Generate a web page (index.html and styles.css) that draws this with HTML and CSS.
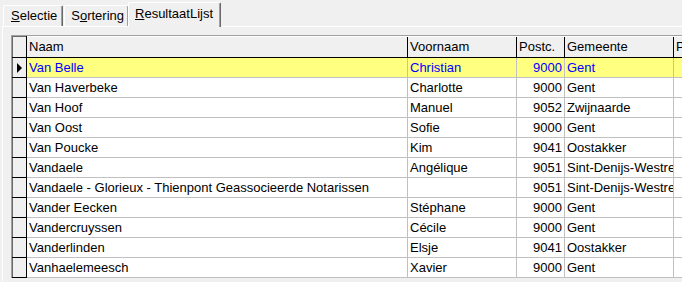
FILE: index.html
```html
<!DOCTYPE html>
<html>
<head>
<meta charset="utf-8">
<title>ResultaatLijst</title>
<link rel="stylesheet" href="styles.css">
</head>
<body>
<div class="tabs">
	<div class="tab first"><u>S</u>electie</div>
	<div class="tab">S<u>o</u>rtering</div>
	<div class="tab active"><u>R</u>esultaatLijst</div>
</div>
<div class="page">
	<div class="grid">
		<table>
			<tr class="head">
				<td class="ind"></td>
				<td class="c-naam">Naam</td>
				<td class="c-voor">Voornaam</td>
				<td class="c-post">Postc.</td>
				<td class="c-gem">Gemeente</td>
				<td class="c-last">P</td>
			</tr>
			<tr class="sel">
				<td class="ind"><span class="arrow"></span></td>
				<td>Van Belle</td><td>Christian</td><td class="num">9000</td><td>Gent</td><td></td>
			</tr>
			<tr><td class="ind"></td><td>Van Haverbeke</td><td>Charlotte</td><td class="num">9000</td><td>Gent</td><td></td></tr>
			<tr><td class="ind"></td><td>Van Hoof</td><td>Manuel</td><td class="num">9052</td><td>Zwijnaarde</td><td></td></tr>
			<tr><td class="ind"></td><td>Van Oost</td><td>Sofie</td><td class="num">9000</td><td>Gent</td><td></td></tr>
			<tr><td class="ind"></td><td>Van Poucke</td><td>Kim</td><td class="num">9041</td><td>Oostakker</td><td></td></tr>
			<tr><td class="ind"></td><td>Vandaele</td><td>Angélique</td><td class="num">9051</td><td>Sint-Denijs-Westrem</td><td></td></tr>
			<tr><td class="ind"></td><td>Vandaele - Glorieux - Thienpont Geassocieerde Notarissen</td><td></td><td class="num">9051</td><td>Sint-Denijs-Westrem</td><td></td></tr>
			<tr><td class="ind"></td><td>Vander Eecken</td><td>Stéphane</td><td class="num">9000</td><td>Gent</td><td></td></tr>
			<tr><td class="ind"></td><td>Vandercruyssen</td><td>Cécile</td><td class="num">9000</td><td>Gent</td><td></td></tr>
			<tr><td class="ind"></td><td>Vanderlinden</td><td>Elsje</td><td class="num">9041</td><td>Oostakker</td><td></td></tr>
			<tr><td class="ind"></td><td>Vanhaelemeesch</td><td>Xavier</td><td class="num">9000</td><td>Gent</td><td></td></tr>
		</table>
	</div>
</div>
</body>
</html>
```

FILE: styles.css
```css
html, body {margin:0;padding:0;height:100%;overflow:hidden;background:#f0f0f0;font-family:"Liberation Sans", Arial, sans-serif;font-size:13px;color:#000;}
.tabs {display:flex;align-items:flex-end;height:26px;padding-left:2px;position:relative;z-index:1;}
.tab {height:20px;line-height:20px;padding:0 4px 0 6px;border-top:1px solid #fff;border-left:1px solid #fff;border-right:1px solid #696969;box-shadow:inset -1px 0 0 #a0a0a0;border-radius:2px 2px 0 0;margin-left:1px;}
.tab.first {padding:0 5px 0 7px;}
.tab.active {height:24px;line-height:22px;margin-bottom:-1px;background:#f0f0f0;padding:0 7px 0 6px;margin-left:-1px;}
.page {height:255px;margin-left:2px;border-top:1px solid #fff;border-left:1px solid #fff;box-sizing:border-box;padding:8px 0 0 8px;overflow:hidden;}
.grid {border-top:1px solid #a0a0a0;border-left:1px solid #a0a0a0;width:760px;background:#fff;}
table {border-collapse:collapse;table-layout:fixed;width:760px;}
td {height:19px;padding:0 0 0 2px;border-right:1px solid #c0c0c0;border-bottom:1px solid #c0c0c0;white-space:nowrap;overflow:hidden;line-height:19px;}
td.ind {width:13px;padding:0;background:#f0f0f0;border-right:1px solid #000;border-bottom:1px solid #000;border-left:1px solid #696969;}
tr.head td {background:#f0f0f0;border-right:1px solid #000;border-bottom:1px solid #000;height:20px;}
tr.head td.ind {border-top:1px solid #696969;}
.c-naam {width:378px;}
.c-voor {width:106px;}
.c-post {width:45px;}
.c-gem {width:106px;}
td.num {text-align:right;padding:0 2px 0 0;}
tr.sel td {background:#ffff80;color:#0000ff;}
tr.sel td.ind {background:#f0f0f0;}
.arrow {display:block;width:0;height:0;margin-left:4px;border-top:5px solid transparent;border-bottom:5px solid transparent;border-left:5px solid #000;}
```
